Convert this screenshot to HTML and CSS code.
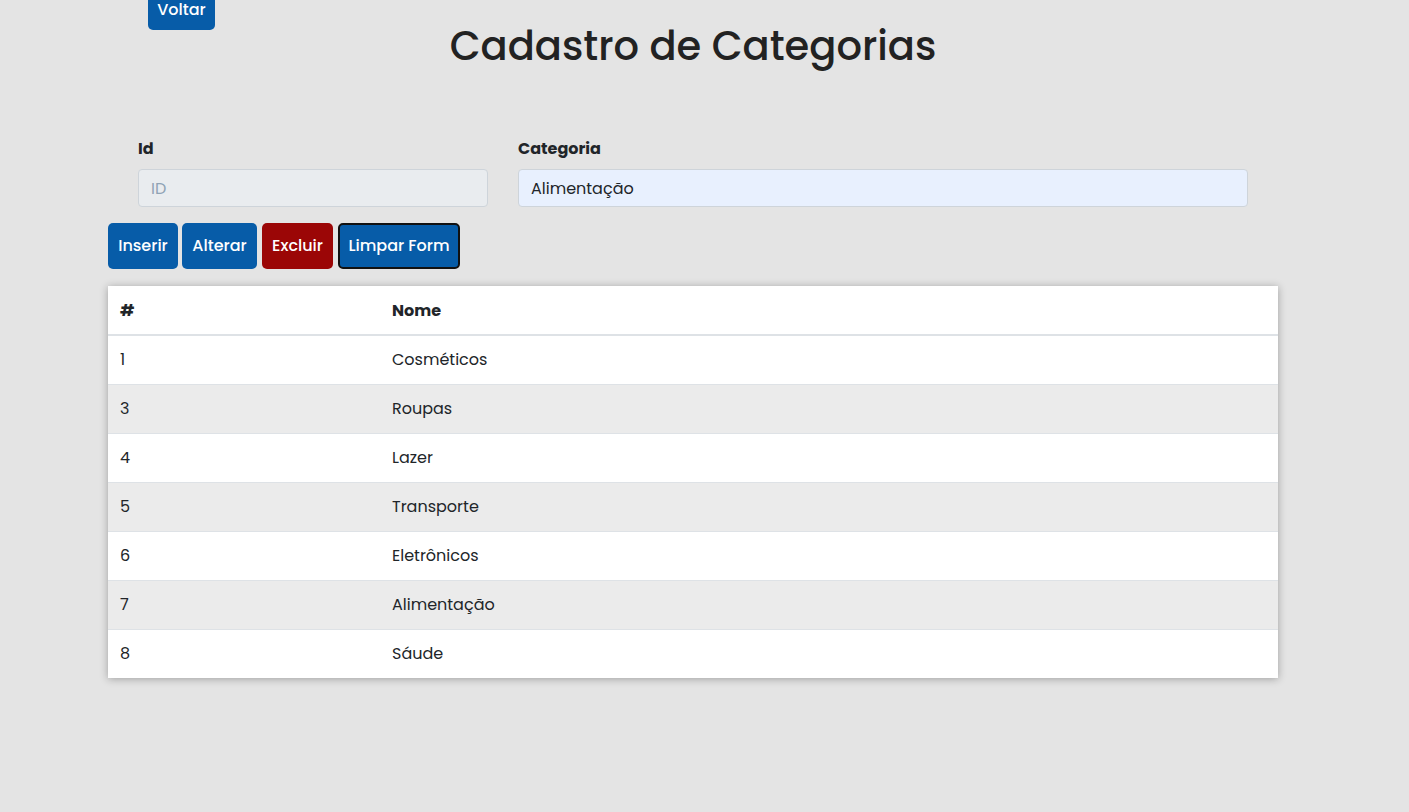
FILE: index.html
```html
<!DOCTYPE html>
<html lang="pt-BR">
<head>
<meta charset="utf-8">
<title>Cadastro de Categorias</title>
<link rel="stylesheet" href="styles.css">
</head>
<body>
<div class="container">
  <div class="header">
    <button class="btn btn-blue btn-back">Voltar</button>
    <h1 class="title">Cadastro de Categorias</h1>
  </div>
  <form class="form">
    <div class="field field-id">
      <label class="label" for="id">Id</label>
      <input class="input input-id" id="id" type="text" placeholder="ID" disabled>
    </div>
    <div class="field field-cat">
      <label class="label" for="cat">Categoria</label>
      <input class="input input-cat" id="cat" type="text" value="Alimentação">
    </div>
  </form>
  <div class="actions">
    <button class="btn btn-blue">Inserir</button>
    <button class="btn btn-blue">Alterar</button>
    <button class="btn btn-red">Excluir</button>
    <button class="btn btn-blue btn-focus">Limpar Form</button>
  </div>
  <table class="table">
    <thead>
      <tr><th class="col-id">#</th><th>Nome</th></tr>
    </thead>
    <tbody>
      <tr><td>1</td><td>Cosméticos</td></tr>
      <tr><td>3</td><td>Roupas</td></tr>
      <tr><td>4</td><td>Lazer</td></tr>
      <tr><td>5</td><td>Transporte</td></tr>
      <tr><td>6</td><td>Eletrônicos</td></tr>
      <tr><td>7</td><td>Alimentação</td></tr>
      <tr><td>8</td><td>Sáude</td></tr>
    </tbody>
  </table>
</div>
</body>
</html>
```
FILE: styles.css
```css
* { box-sizing: border-box; }
html, body {
  margin: 0;
  padding: 0;
  background: #e4e4e4;
  height: 100%;
  overflow: hidden;
}
body {
  font-family: "Poppins", "Open Sans", "DejaVu Sans", sans-serif;
  color: #212529;
  font-size: 16px;
}
.container {
  width: 1170px;
  margin-left: 108px;
}
.header {
  display: flex;
  flex-direction: column;
}
.btn {
  font-family: inherit;
  font-size: 16px;
  font-weight: 500;
  color: #fff;
  border: 0;
  border-radius: 5px;
  padding: 0;
  height: 46px;
  line-height: 46px;
  text-align: center;
  cursor: pointer;
}
.btn-blue { background: #075ca8; }
.btn-red { background: #9b0606; }
.btn-back {
  align-self: flex-start;
  margin-left: 40px;
  margin-top: -11px;
  height: 41px;
  line-height: 41px;
  width: 67px;
}
.btn-focus {
  border: 2px solid #111;
  line-height: 42px;
}
.title {
  margin: 0;
  text-align: center;
  font-weight: 500;
  font-size: 40px;
  line-height: 48px;
  color: #222;
  margin-top: -8px;
}
.form {
  display: flex;
  gap: 30px;
  padding: 0 30px;
  margin-top: 68px;
}
.field { display: flex; flex-direction: column; }
.field-id { width: 350px; }
.field-cat { width: 730px; }
.label {
  font-weight: 700;
  font-size: 16px;
  line-height: 22px;
  margin-bottom: 9px;
}
.input {
  font-family: inherit;
  font-size: 16px;
  height: 38px;
  border: 1px solid #ced4da;
  border-radius: 4px;
  padding: 0 12px;
  color: #212529;
}
.input-id { background: #e9ecef; }
.input-id::placeholder { color: #8fa3b5; }
.input-cat { background: #e8f0fe; }
.actions {
  display: flex;
  margin-top: 16px;
}
.actions .btn:nth-child(1) { width: 70px; margin-right: 4px; }
.actions .btn:nth-child(2) { width: 75px; margin-right: 5px; }
.actions .btn:nth-child(3) { width: 71px; margin-right: 5px; }
.actions .btn:nth-child(4) { width: 122px; }
.table {
  width: 1170px;
  margin-top: 17px;
  border-collapse: collapse;
  background: #fff;
  box-shadow: 0 1px 8px rgba(0, 0, 0, 0.3);
}
.table th, .table td {
  text-align: left;
  padding: 0 12px;
  font-size: 16px;
}
.table th {
  height: 49px;
  font-weight: 700;
  border-bottom: 2px solid #dee2e6;
}
.col-id { width: 272px; }
.table td {
  height: 49px;
  border-top: 1px solid #dee2e6;
}
.table tbody tr:first-child td { border-top: 0; height: 49px; }
.table tbody tr:nth-child(even) td { background: #ebebeb; }
```
